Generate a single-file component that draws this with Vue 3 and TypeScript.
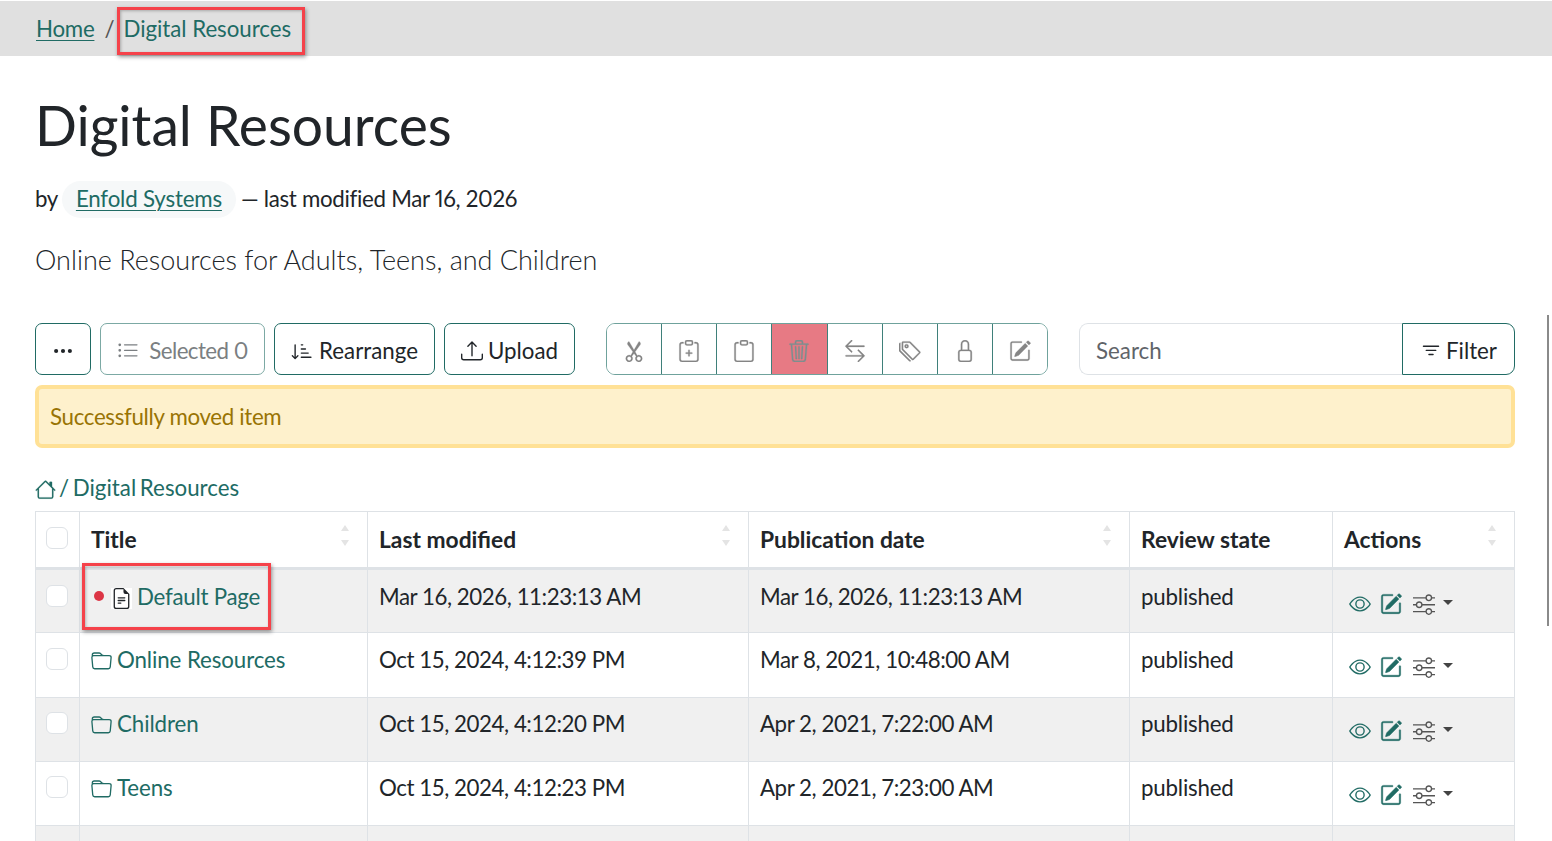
<script setup lang="ts">
interface Row { title: string; icon: 'page' | 'folder'; modified: string; published: string; mark?: boolean }

const p: Record<string, string[]> = {
  dots: ['M3 9.5a1.5 1.5 0 1 1 0-3 1.5 1.5 0 0 1 0 3m5 0a1.5 1.5 0 1 1 0-3 1.5 1.5 0 0 1 0 3m5 0a1.5 1.5 0 1 1 0-3 1.5 1.5 0 0 1 0 3'],
  list: ['M5 11.5a.5.5 0 0 1 .5-.5h9a.5.5 0 0 1 0 1h-9a.5.5 0 0 1-.5-.5m0-4a.5.5 0 0 1 .5-.5h9a.5.5 0 0 1 0 1h-9a.5.5 0 0 1-.5-.5m0-4a.5.5 0 0 1 .5-.5h9a.5.5 0 0 1 0 1h-9a.5.5 0 0 1-.5-.5m-3 1a1 1 0 1 0 0-2 1 1 0 0 0 0 2m0 4a1 1 0 1 0 0-2 1 1 0 0 0 0 2m0 4a1 1 0 1 0 0-2 1 1 0 0 0 0 2'],
  sort: ['M3.5 3.5a.5.5 0 0 0-1 0v8.793l-1.146-1.147a.5.5 0 0 0-.708.708l2 1.999.007.007a.497.497 0 0 0 .7-.006l2-2a.5.5 0 0 0-.707-.708L3.5 12.293zm4 .5a.5.5 0 0 1 0-1h1a.5.5 0 0 1 0 1zm0 3a.5.5 0 0 1 0-1h3a.5.5 0 0 1 0 1zm0 3a.5.5 0 0 1 0-1h5a.5.5 0 0 1 0 1zM7 12.5a.5.5 0 0 0 .5.5h7a.5.5 0 0 0 0-1h-7a.5.5 0 0 0-.5.5'],
  upload: ['M.5 9.9a.5.5 0 0 1 .5.5v2.5a1 1 0 0 0 1 1h12a1 1 0 0 0 1-1v-2.5a.5.5 0 0 1 1 0v2.5a2 2 0 0 1-2 2H2a2 2 0 0 1-2-2v-2.5a.5.5 0 0 1 .5-.5', 'M7.646 1.146a.5.5 0 0 1 .708 0l3 3a.5.5 0 0 1-.708.708L8.5 2.707V11.5a.5.5 0 0 1-1 0V2.707L5.354 4.854a.5.5 0 1 1-.708-.708z'],
  cut: ['M3.5 3.5c-.614-.884-.074-1.962.858-2.5L8 7.226 11.642 1c.932.538 1.472 1.616.858 2.5L8.81 8.61l1.556 2.661a2.5 2.5 0 1 1-.794.637L8 9.73l-1.572 2.177a2.5 2.5 0 1 1-.794-.637L7.19 8.61zm2.5 10a1.5 1.5 0 1 0-3 0 1.5 1.5 0 0 0 3 0m7 0a1.5 1.5 0 1 0-3 0 1.5 1.5 0 0 0 3 0'],
  clipPlus: ['M8 7a.5.5 0 0 1 .5.5V9H10a.5.5 0 0 1 0 1H8.5v1.5a.5.5 0 0 1-1 0V10H6a.5.5 0 0 1 0-1h1.5V7.5A.5.5 0 0 1 8 7', 'M4 1.5H3a2 2 0 0 0-2 2V14a2 2 0 0 0 2 2h10a2 2 0 0 0 2-2V3.5a2 2 0 0 0-2-2h-1v1h1a1 1 0 0 1 1 1V14a1 1 0 0 1-1 1H3a1 1 0 0 1-1-1V3.5a1 1 0 0 1 1-1h1z', 'M9.5 1a.5.5 0 0 1 .5.5v1a.5.5 0 0 1-.5.5h-3a.5.5 0 0 1-.5-.5v-1a.5.5 0 0 1 .5-.5zm-3-1A1.5 1.5 0 0 0 5 1.5v1A1.5 1.5 0 0 0 6.5 4h3A1.5 1.5 0 0 0 11 2.5v-1A1.5 1.5 0 0 0 9.5 0z'],
  clip: ['M4 1.5H3a2 2 0 0 0-2 2V14a2 2 0 0 0 2 2h10a2 2 0 0 0 2-2V3.5a2 2 0 0 0-2-2h-1v1h1a1 1 0 0 1 1 1V14a1 1 0 0 1-1 1H3a1 1 0 0 1-1-1V3.5a1 1 0 0 1 1-1h1z', 'M9.5 1a.5.5 0 0 1 .5.5v1a.5.5 0 0 1-.5.5h-3a.5.5 0 0 1-.5-.5v-1a.5.5 0 0 1 .5-.5zm-3-1A1.5 1.5 0 0 0 5 1.5v1A1.5 1.5 0 0 0 6.5 4h3A1.5 1.5 0 0 0 11 2.5v-1A1.5 1.5 0 0 0 9.5 0z'],
  trash: ['M6.5 1h3a.5.5 0 0 1 .5.5v1H6v-1a.5.5 0 0 1 .5-.5M11 2.5v-1A1.5 1.5 0 0 0 9.5 0h-3A1.5 1.5 0 0 0 5 1.5v1H1.5a.5.5 0 0 0 0 1h.538l.853 10.66A2 2 0 0 0 4.885 16h6.23a2 2 0 0 0 1.994-1.84l.853-10.66h.538a.5.5 0 0 0 0-1zm1.958 1-.846 10.58a1 1 0 0 1-.997.92h-6.23a1 1 0 0 1-.997-.92L3.042 3.5zm-7.487 1a.5.5 0 0 1 .528.47l.5 8.5a.5.5 0 0 1-.998.06L5 5.03a.5.5 0 0 1 .47-.53Zm5.058 0a.5.5 0 0 1 .47.53l-.5 8.5a.5.5 0 1 1-.998-.06l.5-8.5a.5.5 0 0 1 .528-.47M8 4.5a.5.5 0 0 1 .5.5v8.5a.5.5 0 0 1-1 0V5a.5.5 0 0 1 .5-.5'],
  swap: ['M1 11.5a.5.5 0 0 0 .5.5h11.793l-3.147 3.146a.5.5 0 0 0 .708.708l4-4a.5.5 0 0 0 0-.708l-4-4a.5.5 0 0 0-.708.708L13.293 11H1.5a.5.5 0 0 0-.5.5m14-7a.5.5 0 0 1-.5.5H2.707l3.147 3.146a.5.5 0 1 1-.708.708l-4-4a.5.5 0 0 1 0-.708l4-4a.5.5 0 1 1 .708.708L2.707 4H14.5a.5.5 0 0 1 .5.5'],
  tags: ['M3 2v4.586l7 7L14.586 9l-7-7zM2 2a1 1 0 0 1 1-1h4.586a1 1 0 0 1 .707.293l7 7a1 1 0 0 1 0 1.414l-4.586 4.586a1 1 0 0 1-1.414 0l-7-7A1 1 0 0 1 2 6.586z', 'M5.5 5a.5.5 0 1 1 0-1 .5.5 0 0 1 0 1m0 1a1.5 1.5 0 1 0 0-3 1.5 1.5 0 0 0 0 3M1 7.086a1 1 0 0 0 .293.707L8.75 15.25l-.043.043a1 1 0 0 1-1.414 0l-7-7A1 1 0 0 1 0 7.586V3a1 1 0 0 1 1-1z'],
  lock: ['M8 1a2 2 0 0 1 2 2v4H6V3a2 2 0 0 1 2-2m3 6V3a3 3 0 0 0-6 0v4a2 2 0 0 0-2 2v5a2 2 0 0 0 2 2h6a2 2 0 0 0 2-2V9a2 2 0 0 0-2-2M5 8h6a1 1 0 0 1 1 1v5a1 1 0 0 1-1 1H5a1 1 0 0 1-1-1V9a1 1 0 0 1 1-1'],
  edit: ['M15.502 1.94a.5.5 0 0 1 0 .706L14.459 3.69l-2-2L13.502.646a.5.5 0 0 1 .707 0l1.293 1.293zm-1.75 2.456-2-2L4.939 9.21a.5.5 0 0 0-.121.196l-.805 2.414a.25.25 0 0 0 .316.316l2.414-.805a.5.5 0 0 0 .196-.12l6.813-6.814z', 'M1 13.5A1.5 1.5 0 0 0 2.5 15h11a1.5 1.5 0 0 0 1.5-1.5v-6a.5.5 0 0 0-1 0v6a.5.5 0 0 1-.5.5h-11a.5.5 0 0 1-.5-.5v-11a.5.5 0 0 1 .5-.5H9a.5.5 0 0 0 0-1H2.5A1.5 1.5 0 0 0 1 2.5z'],
  filter: ['M6 10.5a.5.5 0 0 1 .5-.5h3a.5.5 0 0 1 0 1h-3a.5.5 0 0 1-.5-.5m-2-3a.5.5 0 0 1 .5-.5h7a.5.5 0 0 1 0 1h-7a.5.5 0 0 1-.5-.5m-2-3a.5.5 0 0 1 .5-.5h11a.5.5 0 0 1 0 1h-11a.5.5 0 0 1-.5-.5'],
  house: ['M8.707 1.5a1 1 0 0 0-1.414 0L.646 8.146a.5.5 0 0 0 .708.708L2 8.207V13.5A1.5 1.5 0 0 0 3.5 15h9a1.5 1.5 0 0 0 1.5-1.5V8.207l.646.647a.5.5 0 0 0 .708-.708L13 5.793V2.5a.5.5 0 0 0-.5-.5h-1a.5.5 0 0 0-.5.5v1.293zM13 7.207V13.5a.5.5 0 0 1-.5.5h-9a.5.5 0 0 1-.5-.5V7.207l5-5z'],
  page: ['M5.5 7a.5.5 0 0 0 0 1h5a.5.5 0 0 0 0-1zM5 9.5a.5.5 0 0 1 .5-.5h5a.5.5 0 0 1 0 1h-5a.5.5 0 0 1-.5-.5m0 2a.5.5 0 0 1 .5-.5h2a.5.5 0 0 1 0 1h-2a.5.5 0 0 1-.5-.5', 'M9.5 0H4a2 2 0 0 0-2 2v12a2 2 0 0 0 2 2h8a2 2 0 0 0 2-2V4.5zm0 1v2A1.5 1.5 0 0 0 11 4.5h2V14a1 1 0 0 1-1 1H4a1 1 0 0 1-1-1V2a1 1 0 0 1 1-1z'],
  folder: ['M.54 3.87.5 3a2 2 0 0 1 2-2h3.672a2 2 0 0 1 1.414.586l.828.828A2 2 0 0 0 9.828 3h3.982a2 2 0 0 1 1.992 2.181l-.637 7A2 2 0 0 1 13.174 14H2.826a2 2 0 0 1-1.991-1.819l-.637-7a2 2 0 0 1 .342-1.31zM2.19 4a1 1 0 0 0-.996 1.09l.637 7a1 1 0 0 0 .995.91h10.348a1 1 0 0 0 .995-.91l.637-7A1 1 0 0 0 13.81 4zm4.69-1.707A1 1 0 0 0 6.172 2H2.5a1 1 0 0 0-1 .981l.006.139q.323-.119.684-.12h5.396z'],
  eye: ['M16 8s-3-5.5-8-5.5S0 8 0 8s3 5.5 8 5.5S16 8 16 8M1.173 8a13 13 0 0 1 1.66-2.043C4.12 4.668 5.88 3.5 8 3.5s3.879 1.168 5.168 2.457A13 13 0 0 1 14.828 8q-.086.13-.195.288c-.335.48-.83 1.12-1.465 1.755C11.879 11.332 10.119 12.5 8 12.5s-3.879-1.168-5.168-2.457A13 13 0 0 1 1.172 8z', 'M8 5.5a2.5 2.5 0 1 0 0 5 2.5 2.5 0 0 0 0-5M4.5 8a3.5 3.5 0 1 1 7 0 3.5 3.5 0 0 1-7 0'],
  sliders: ['M11.5 2a1.5 1.5 0 1 0 0 3 1.5 1.5 0 0 0 0-3M9.05 3a2.5 2.5 0 0 1 4.9 0H16v1h-2.05a2.5 2.5 0 0 1-4.9 0H0V3zM4.5 7a1.5 1.5 0 1 0 0 3 1.5 1.5 0 0 0 0-3M2.05 8a2.5 2.5 0 0 1 4.9 0H16v1H6.95a2.5 2.5 0 0 1-4.9 0H0V8zm9.45 4a1.5 1.5 0 1 0 0 3 1.5 1.5 0 0 0 0-3m-2.45 1a2.5 2.5 0 0 1 4.9 0H16v1h-2.05a2.5 2.5 0 0 1-4.9 0H0v-1z'],
}

const groupIcons = ['cut', 'clipPlus', 'clip', 'trash', 'swap', 'tags', 'lock', 'edit']
const columns = ['Title', 'Last modified', 'Publication date', 'Review state', 'Actions']
const rows: Row[] = [
  { title: 'Default Page', icon: 'page', modified: 'Mar 16, 2026, 11:23:13 AM', published: 'Mar 16, 2026, 11:23:13 AM', mark: true },
  { title: 'Online Resources', icon: 'folder', modified: 'Oct 15, 2024, 4:12:39 PM', published: 'Mar 8, 2021, 10:48:00 AM' },
  { title: 'Children', icon: 'folder', modified: 'Oct 15, 2024, 4:12:20 PM', published: 'Apr 2, 2021, 7:22:00 AM' },
  { title: 'Teens', icon: 'folder', modified: 'Oct 15, 2024, 4:12:23 PM', published: 'Apr 2, 2021, 7:23:00 AM' },
]
</script>

<template>
  <div class="page">
    <nav class="crumbs">
      <a class="link">Home</a>
      <span class="sep">/</span>
      <span class="current"><span class="mark mark-crumb"></span>Digital Resources</span>
    </nav>

    <main class="content">
      <h1>Digital Resources</h1>
      <p class="byline">
        <span class="by">by</span>
        <span class="pill"><a class="link">Enfold Systems</a></span>
        <span class="modified">— last modified Mar 16, 2026</span>
      </p>
      <p class="lead">Online Resources for Adults, Teens, and Children</p>

      <div class="toolbar">
        <button class="btn btn-more"><svg class="i" viewBox="0 0 16 16"><path v-for="d in p.dots" :key="d" :d="d" /></svg></button>
        <button class="btn btn-muted"><svg class="i" viewBox="0 0 16 16"><path v-for="d in p.list" :key="d" :d="d" /></svg><span class="gap">Selected 0</span></button>
        <button class="btn btn-rearrange"><svg class="i" viewBox="0 0 16 16"><path v-for="d in p.sort" :key="d" :d="d" /></svg><span>Rearrange</span></button>
        <button class="btn btn-upload"><svg class="i" viewBox="0 0 16 16"><path v-for="d in p.upload" :key="d" :d="d" /></svg><span>Upload</span></button>

        <div class="group">
          <button v-for="name in groupIcons" :key="name" class="gbtn" :class="{ danger: name === 'trash' }">
            <svg class="i gi" viewBox="0 0 16 16"><path v-for="d in p[name]" :key="d" :d="d" /></svg>
          </button>
        </div>

        <div class="search">
          <div class="input">Search</div>
          <button class="filter"><svg class="i" viewBox="0 0 16 16"><path v-for="d in p.filter" :key="d" :d="d" /></svg><span>Filter</span></button>
        </div>
      </div>

      <div class="alert">Successfully moved item</div>

      <div class="path">
        <svg class="i home" viewBox="0 0 16 16"><path v-for="d in p.house" :key="d" :d="d" /></svg>
        <span class="path-text">/ Digital Resources</span>
      </div>

      <table>
        <colgroup>
          <col class="c0" /><col class="c1" /><col class="c2" /><col class="c3" /><col class="c4" /><col />
        </colgroup>
        <thead>
          <tr>
            <th><span class="check"></span></th>
            <th v-for="c in columns" :key="c">
              <div class="head">
                <span>{{ c }}</span>
                <span v-if="c !== 'Review state'" class="arrows"><i class="up"></i><i class="down"></i></span>
              </div>
            </th>
          </tr>
        </thead>
        <tbody>
          <tr v-for="r in rows" :key="r.title">
            <td><span class="check"></span></td>
            <td class="title-cell">
              <span v-if="r.mark" class="mark mark-row"></span>
              <a class="item" :class="{ marked: r.mark }">
                <span v-if="r.mark" class="dot"></span>
                <svg class="i ti" :class="r.icon" viewBox="0 0 16 16"><path v-for="d in p[r.icon]" :key="d" :d="d" /></svg>
                <span>{{ r.title }}</span>
              </a>
            </td>
            <td class="num">{{ r.modified }}</td>
            <td class="num">{{ r.published }}</td>
            <td class="state">published</td>
            <td>
              <div class="actions">
                <svg class="i teal" viewBox="0 0 16 16"><path v-for="d in p.eye" :key="d" :d="d" /></svg>
                <svg class="i teal bold" viewBox="0 0 16 16"><path v-for="d in p.edit" :key="d" :d="d" /></svg>
                <svg class="i slider" viewBox="0 0 16 16"><path v-for="d in p.sliders" :key="d" :d="d" /></svg>
                <span class="caret"></span>
              </div>
            </td>
          </tr>
          <tr class="stub">
            <td></td><td></td><td></td><td></td><td></td><td></td>
          </tr>
        </tbody>
      </table>
    </main>

    <div class="scrollbar"></div>
  </div>
</template>

<style>
html, body { margin: 0; overflow: hidden; background: #fff; }
</style>

<style scoped>
.page {
  position: relative;
  height: 841px;
  overflow: hidden;
  font-family: Lato, "Liberation Sans", sans-serif;
  font-size: 22.3px;
  line-height: 1.5;
  font-variant-numeric: proportional-nums;
  color: #212529;
  background: #fff;
}
.link { color: #206b64; text-decoration: underline; text-underline-offset: 3px; text-decoration-thickness: 1px; }
.crumbs {
  display: flex;
  align-items: center;
  height: 55px;
  margin-top: 1px;
  padding-left: 36px;
  padding-top: 1px;
  box-sizing: border-box;
  background: #e0e0e0;
}
.crumbs .link { letter-spacing: -.25px; }
.sep { margin: 0 9px 0 10px; color: #555; }
.current { position: relative; color: #206b64; letter-spacing: -.05px; }
.mark {
  position: absolute;
  box-sizing: border-box;
  border: 3px solid #f5424a;
  box-shadow: 1px 2px 4px rgba(0, 0, 0, .4), inset 1px 1px 3px rgba(0, 0, 0, .25);
  pointer-events: none;
}
.mark-crumb { left: -7px; top: -5px; width: 188px; height: 48px; }
.content { padding: 0 37px 0 35px; }
h1 { margin: 35px 0 0 0; font-size: 55.2px; font-weight: 400; line-height: 68px; }
.byline { display: flex; align-items: center; margin: 21px 0 0; height: 38px; }
.by { letter-spacing: -.4px; }
.pill { margin: 0 5px 0 4px; padding: 0 14px; height: 37px; display: flex; align-items: center; background: #f6f8f9; border-radius: 19px; letter-spacing: -.18px; }
.modified { letter-spacing: -.3px; }
.lead { margin: 21px 0 0; font-size: 27px; font-weight: 300; line-height: 42px; }
.toolbar { display: flex; align-items: stretch; height: 52px; margin-top: 42px; }
button { font: inherit; font-variant-numeric: inherit; color: inherit; background: #fff; padding: 0; cursor: pointer; }
.i { width: 1em; height: 1em; fill: currentColor; flex: none; }
.btn {
  box-sizing: border-box;
  display: flex; align-items: center; justify-content: center;
  border: 1px solid #206b64;
  border-radius: 7px;
  margin-right: 9px;
  gap: 6px;
  padding-top: 3px;
}
.btn .i { width: 22px; height: 22px; }
.btn-more { width: 56px; }
.btn-muted { width: 165px; color: #7b7f82; border-color: #7ca9a4; }
.btn-muted .gap { margin-left: 4px; letter-spacing: -.55px; }
.btn-rearrange { width: 161px; }
.btn-upload { width: 131px; margin-right: 31px; gap: 5px; }
.group {
  display: flex;
  width: 442px;
  box-sizing: border-box;
  border: 1px solid #6fa29c;
  border-radius: 9px;
  overflow: hidden;
  margin-right: 31px;
}
.gbtn {
  flex: 1;
  display: flex; align-items: center; justify-content: center;
  border: 0;
  border-left: 1px solid #3f807a;
  color: #858585;
}
.gbtn:first-child { border-left: 0; }
.gi { width: 22px; height: 22px; margin-top: 4px; stroke: currentColor; stroke-width: .2px; }
.danger { background: #e77a84; border-right: 1px solid #3f807a; color: #7d8f8f; margin-right: -1px; }
.search { display: flex; flex: 1; }
.input {
  flex: 1;
  display: flex; align-items: center;
  box-sizing: border-box;
  padding: 3px 0 0 16px;
  border: 1px solid #dee2e6;
  border-right: 0;
  border-radius: 9px 0 0 9px;
  color: #606469;
}
.filter {
  width: 113px;
  box-sizing: border-box;
  display: flex; align-items: center; justify-content: center;
  gap: 4px;
  padding-top: 3px;
  border: 1px solid #206b64;
  border-radius: 0 9px 9px 0;
}
.filter .i { width: 22px; height: 22px; margin-top: 1px; }
.alert {
  box-sizing: border-box;
  height: 63px;
  margin-top: 10px;
  padding-left: 11px;
  display: flex; align-items: center;
  background: #fef1cc;
  border: 4px solid #ffe196;
  border-radius: 7px;
  color: #997404;
  letter-spacing: -.33px;
}
.path { display: flex; align-items: center; gap: 3px; height: 36px; margin-top: 22px; color: #206b64; }
.path-text { word-spacing: -2px; }
.home { width: 21px; height: 21px; margin-top: 3px; stroke: currentColor; stroke-width: .15px; }
table {
  width: 1480px;
  margin-top: 5px;
  table-layout: fixed;
  border-collapse: collapse;
  border: 1px solid #dee2e6;
}
.c0 { width: 44px; }
.c1 { width: 288px; }
.c2 { width: 381px; }
.c3 { width: 381px; }
.c4 { width: 203px; }
th, td { border: 1px solid #dee2e6; padding: 0 11px; text-align: left; vertical-align: top; }
thead th { height: 55px; border-bottom: 3px solid #dee2e6; vertical-align: middle; font-weight: 700; font-size: 22.8px; }
tbody td { height: 64.3px; box-sizing: border-box; padding-top: 9.5px; }
tbody tr:nth-child(odd) td { background: #f0f0f0; }
.stub td { height: 40px; }
.num { font-variant-numeric: tabular-nums; letter-spacing: -.45px; }
.state { letter-spacing: -.2px; }
.head { display: flex; justify-content: space-between; align-items: center; }
.arrows { display: flex; flex-direction: column; gap: 9px; margin-right: 7px; margin-top: -8px; }
.up, .down { display: block; width: 0; height: 0; border-left: 4px solid transparent; border-right: 4px solid transparent; }
.up { border-bottom: 6px solid #e4e4e4; }
.down { border-top: 6px solid #e4e4e4; }
th:first-child, td:first-child { padding-left: 10px; }
.check {
  display: block;
  box-sizing: border-box;
  width: 22px; height: 22px;
  border: 1px solid #dee2e6;
  border-radius: 6px;
  background: #fff;
}
td .check { margin-top: 5px; }
th:first-child { vertical-align: middle; }
th .check { margin-top: -3px; }
.title-cell { position: relative; }
.mark-row { left: 2px; top: -7px; width: 189px; height: 67px; }
.item { display: flex; align-items: center; gap: 5px; color: #206b64; letter-spacing: -.1px; }
.item.marked { letter-spacing: -.25px; }
.dot { width: 10px; height: 10px; border-radius: 50%; background: #dc3545; margin: 0 3px 0 3px; }
.ti.folder { width: 21px; height: 21px; margin-top: 3px; }
.ti.page { width: 21px; height: 21px; margin: 5px 0 0 -1px; }
.actions { display: flex; align-items: center; gap: 9px; height: 40px; margin-top: 4px; padding-left: 5px; }
.actions .i { width: 22px; height: 22px; }
.teal { color: #206b64; }
.bold { stroke: currentColor; stroke-width: .35px; }
.slider { color: #555; margin-left: 2px; }
.caret { width: 0; height: 0; margin-left: -1px; margin-top: -3px; border-left: 5px solid transparent; border-right: 5px solid transparent; border-top: 5px solid #444; }
.scrollbar { position: absolute; right: 3px; top: 315px; width: 2px; height: 311px; background: #8a8a8a; }
</style>
